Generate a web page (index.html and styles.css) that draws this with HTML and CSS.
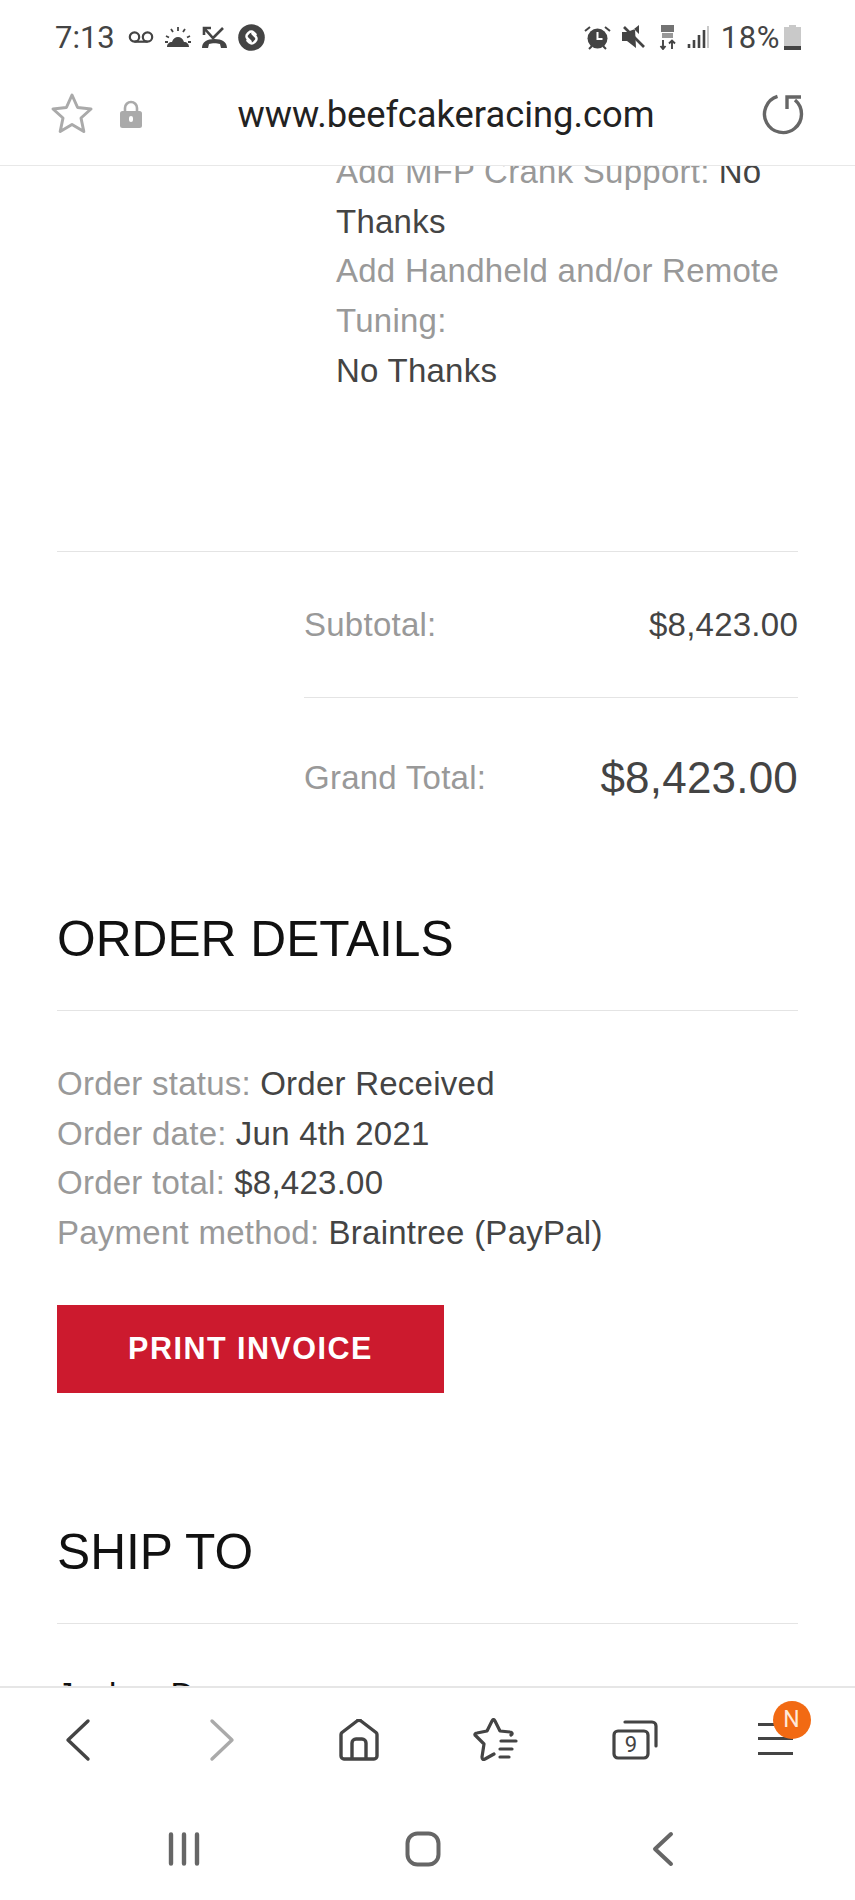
FILE: index.html
```html
<!DOCTYPE html>
<html lang="en">
<head>
<meta charset="utf-8">
<title>Order details</title>
<link rel="stylesheet" href="styles.css">
</head>
<body>
<div class="phone">
  <header class="status">
    <div class="status-left">
      <span class="clock">7:13</span>
      <svg width="26" height="14" viewBox="0 0 26 14"><circle cx="6.500" cy="7" r="4.700" fill="none" stroke="#444" stroke-width="2.200"/><circle cx="19.500" cy="7" r="4.700" fill="none" stroke="#444" stroke-width="2.200"/><path d="M6.500 11.700h13" stroke="#444" stroke-width="2.200"/></svg>
      <svg width="26" height="22" viewBox="0 0 26 22"><path d="M2 21c0-3 2-5 5-5 1-3.500 3.500-5 6-5s5 1.500 6 5c3 0 5 2 5 5z" fill="#444"/><path d="M13 1v4M6 3l2 3M20 3l-2 3M1 10l3 1.500M25 10l-3 1.500M0 16h3M23 16h3" stroke="#444" stroke-width="1.800"/></svg>
      <svg width="25" height="24" viewBox="0 0 25 24"><path d="M0 23c0-6 5-9 12.500-9S25 17 25 23h-6l-1-4c-3-1-8-1-11 0l-1 4z" fill="#444"/><path d="M2 3l9 10L21 3M2 10V3h7" fill="none" stroke="#444" stroke-width="2.600"/></svg>
      <svg width="27" height="27" viewBox="0 0 27 27"><circle cx="13.500" cy="13.500" r="13.300" fill="#444"/><path d="M12.500 17.500l-3-3a3 3 0 0 1 0-4.500l1.500-1.500a3 3 0 0 1 4.500 0l2 2M14.500 9.500l3 3a3 3 0 0 1 0 4.500l-1.500 1.500a3 3 0 0 1-4.500 0l-2-2" fill="none" stroke="#fff" stroke-width="2.500" stroke-linecap="round"/></svg>
    </div>
    <div class="status-right">
      <svg class="s-alarm" width="27" height="25" viewBox="0 0 27 25"><circle cx="13.500" cy="13.500" r="10" fill="#444"/><path d="M13.500 7v7h5" fill="none" stroke="#fff" stroke-width="2"/><path d="M1 6l5-4M26 6l-5-4M5 24l3-3M22 24l-3-3" stroke="#444" stroke-width="2"/></svg>
      <svg class="s-mute" width="24" height="24" viewBox="0 0 24 24"><path d="M0 7v9h5l9 7-1-19-8 3zM17 0v9l-5-5z" fill="#444"/><path d="M2 2l20 20" stroke="#444" stroke-width="2.600"/></svg>
      <svg class="s-net" width="17" height="26" viewBox="0 0 17 26"><path d="M4 16v9M1.500 22l2.500 3 2.500-3M13 25v-9M10 19.500l3-3 3 3" fill="none" stroke="#444" stroke-width="1.900"/><rect x="2" y="1" width="13" height="7" fill="#444" opacity=".75"/><rect x="3" y="9" width="11" height="5" fill="#444" opacity=".55"/></svg>
      <svg class="s-sig" width="22" height="24" viewBox="0 0 22 24"><path d="M2 19v4M7 15v8M12 10v13M17 5v18" stroke="#444" stroke-width="2.600"/><path d="M21 1v22" stroke="#bbb" stroke-width="1.600"/></svg>
      <span class="battery-text">18%</span>
      <svg class="s-bat" width="17" height="25" viewBox="0 0 17 25"><path d="M5 2V0h7v2h5v23H0V2z" fill="#c9c9c9"/><rect y="21" width="17" height="4" fill="#444"/></svg>
    </div>
  </header>

  <nav class="urlbar">
    <svg class="star" width="44" height="44" viewBox="0 0 44 44"><path d="M22 3l5.600 12.500 13.400 1.500-10 9 2.800 13.500L22 32.500 10.200 39.500 13 26 3 17l13.400-1.500z" fill="none" stroke="#aaa" stroke-width="3" stroke-linejoin="round"/></svg>
    <svg class="lock" width="22" height="28" viewBox="0 0 22 28"><path d="M5 12V8a6 6 0 0 1 12 0v4" fill="none" stroke="#aaa" stroke-width="2.600"/><rect y="11" width="22" height="17" rx="2.500" fill="#aaa"/><rect x="9" y="16" width="4" height="6" rx="2" fill="#fff"/></svg>
    <span class="url">www.beefcakeracing.com</span>
    <svg class="reload" width="42" height="42" viewBox="0 0 42 42"><path d="M15.500 3.400A18.500 18.500 0 1 0 33 7" fill="none" stroke="#666" stroke-width="3.400"/><path d="M25 16V4h14" fill="none" stroke="#666" stroke-width="3.400"/></svg>
  </nav>

  <main class="page">
    <section class="item-meta">
      <p><span class="lbl">Add MFP Crank Support:</span> <span class="val">No Thanks</span></p>
      <p><span class="lbl">Add Handheld and/or Remote Tuning:</span></p>
      <p><span class="val">No Thanks</span></p>
    </section>

    <section class="totals">
      <div class="total-row"><span class="lbl">Subtotal:</span><span class="val">$8,423.00</span></div>
      <div class="total-row grand"><span class="lbl">Grand Total:</span><span class="grand-val">$8,423.00</span></div>
    </section>

    <section class="details">
      <h2>ORDER DETAILS</h2>
      <ul class="facts">
        <li><span class="lbl">Order status:</span> <span class="val">Order Received</span></li>
        <li><span class="lbl">Order date:</span> <span class="val">Jun 4th 2021</span></li>
        <li><span class="lbl">Order total:</span> <span class="val">$8,423.00</span></li>
        <li><span class="lbl">Payment method:</span> <span class="val">Braintree (PayPal)</span></li>
      </ul>
      <a class="btn">PRINT INVOICE</a>
    </section>

    <section class="ship">
      <h2>SHIP TO</h2>
      <p class="addr">Jackey D</p>
    </section>
  </main>

  <footer class="toolbar">
    <svg width="30" height="44" viewBox="0 0 30 44"><path d="M25 3L5 22l20 19" fill="none" stroke="#444" stroke-width="3.400" stroke-linecap="round" stroke-linejoin="round"/></svg>
    <svg width="30" height="44" viewBox="0 0 30 44"><path d="M5 3l20 19L5 41" fill="none" stroke="#aaa" stroke-width="3.400" stroke-linecap="round" stroke-linejoin="round"/></svg>
    <svg width="42" height="42" viewBox="0 0 42 42"><path d="M3 16a3 3 0 0 1 1-2.500L19 2a3 3 0 0 1 4 0l15 11.500a3 3 0 0 1 1 2.500v21a3 3 0 0 1-3 3H6a3 3 0 0 1-3-3zM14 40V24a4 4 0 0 1 4-4h6a4 4 0 0 1 4 4v16" fill="none" stroke="#444" stroke-width="3.400" stroke-linejoin="round"/></svg>
    <svg width="46" height="44" viewBox="0 0 46 44"><path d="M38 17c2-1 1-3-1-3l-10-1-5-10c-1-2-2-2-3 0l-5 10-10 2c-2 0-3 2-1 3l8 8-2 13c0 2 1 3 3 2l9-5M28 23h15M27 31h12M27 39h9" fill="none" stroke="#444" stroke-width="3.200" stroke-linecap="round" stroke-linejoin="round"/></svg>
    <div class="tabs"><svg width="46" height="40" viewBox="0 0 46 40"><path d="M13 2h27a4 4 0 0 1 4 4v20" fill="none" stroke="#444" stroke-width="3.200" stroke-linecap="round"/><rect x="2" y="11" width="34" height="27" rx="4" fill="none" stroke="#444" stroke-width="3.200"/></svg><span class="tab-count">9</span></div>
    <div class="menu"><i></i><i></i><i></i><span class="badge">N</span></div>
  </footer>

  <footer class="sysnav">
    <svg width="32" height="34" viewBox="0 0 32 34"><path d="M3 2.500v29M16 2.500v29M29 2.500v29" stroke="#666" stroke-width="4.400" stroke-linecap="round"/></svg>
    <svg width="36" height="36" viewBox="0 0 36 36"><rect x="2.500" y="2.500" width="31" height="31" rx="10" fill="none" stroke="#666" stroke-width="4"/></svg>
    <svg width="24" height="36" viewBox="0 0 24 36"><path d="M20 3L4 18l16 15" fill="none" stroke="#666" stroke-width="4" stroke-linecap="round" stroke-linejoin="round"/></svg>
  </footer>
</div>
</body>
</html>
```
FILE: styles.css
```css
* { box-sizing: border-box; }
html, body { margin: 0; padding: 0; background: #fff; }
body { font-family: "Liberation Sans", Arial, sans-serif; }
.phone { width: 855px; height: 1900px; display: flex; flex-direction: column; overflow: hidden; }
p, ul, h2 { margin: 0; padding: 0; }

.status { height: 72px; flex: none; display: flex; justify-content: space-between; align-items: center; padding: 2px 54px 0 55px; color: #444; }
.status-left, .status-right { display: flex; align-items: center; }
.status-left { gap: 11px; }
.clock { font-family: Roboto, sans-serif; font-size: 31px; margin-right: 2px; }
.battery-text { font-family: Roboto, sans-serif; font-size: 31px; letter-spacing: .6px; margin-left: 12px; }
.s-mute { margin-left: 11px; }
.s-net { margin-left: 13px; }
.s-sig { margin-left: 11px; }
.s-bat { margin-left: 4px; }

.urlbar { height: 94px; flex: none; display: flex; align-items: center; border-bottom: 1px solid #e8e8e8; padding: 0 51px 10px 50px; }
.star { flex: none; }
.lock { flex: none; margin-left: 26px; }
.url { flex: 1; text-align: center; font-family: Roboto, sans-serif; font-size: 36.300px; color: #222; padding: 2px 12px 0 0; }
.reload { flex: none; }

.page { flex: 1; min-height: 0; overflow: hidden; padding: 0 57px; color: #444; font-size: 33px; }
.lbl { color: #999; letter-spacing: .25px; }
.val { color: #444; letter-spacing: .25px; }

.item-meta { margin-top: -19px; margin-left: 279px; line-height: 49.700px; height: 404px; }
.totals { border-top: 1px solid #e4e4e4; }
.total-row { display: flex; justify-content: space-between; align-items: center; margin-left: 247px; height: 146px; border-bottom: 1px solid #e4e4e4; }
.total-row.grand { border-bottom: 0; height: 161px; padding-bottom: 1px; }
.grand-val { font-size: 44px; letter-spacing: .2px; color: #444; }

h2 { font-weight: 400; font-size: 49.700px; color: #111; line-height: 54px; }
.details h2 { margin-top: 53px; padding-bottom: 44px; border-bottom: 1px solid #e4e4e4; }
.facts { list-style: none; margin-top: 48px; line-height: 49.700px; }
.btn { display: flex; align-items: center; justify-content: center; width: 387px; height: 88px; margin-top: 47.500px; padding-bottom: 2px; background: #cc1a2e; color: #fff; font-weight: 700; font-size: 30.500px; letter-spacing: 1.500px; }
.ship h2 { margin-top: 132px; padding-bottom: 44px; border-bottom: 1px solid #e4e4e4; }
.addr { margin-top: 51px; color: #111; line-height: 40px; letter-spacing: .25px; }

.toolbar { height: 122px; flex: none; border-top: 2px solid #e6e6e6; display: grid; grid-template-columns: 140px 147px 127px 148px 130px 150px; justify-items: center; align-items: center; padding: 0 0 16px 8px; }
.tabs { position: relative; width: 46px; height: 40px; }
.tab-count { position: absolute; left: 2px; width: 34px; top: 11px; line-height: 27px; text-align: center; font-family: Roboto, sans-serif; font-size: 22px; color: #444; }
.menu { position: relative; width: 35px; height: 32px; margin-top: -3px; display: flex; flex-direction: column; justify-content: space-between; }
.menu i { display: block; height: 3px; background: #444; }
.badge { position: absolute; left: 15px; top: -21.500px; width: 38px; height: 38px; border-radius: 50%; background: #f26a13; color: #ffe9d8; font-family: Roboto, sans-serif; font-size: 23px; line-height: 38px; text-align: center; }

.sysnav { height: 92px; flex: none; display: flex; align-items: center; padding: 0 0 11px 0; }
.sysnav svg { flex: none; }
.sysnav svg:nth-child(1) { margin-left: 168px; }
.sysnav svg:nth-child(2) { margin-left: 205px; }
.sysnav svg:nth-child(3) { margin-left: 210px; }
```
